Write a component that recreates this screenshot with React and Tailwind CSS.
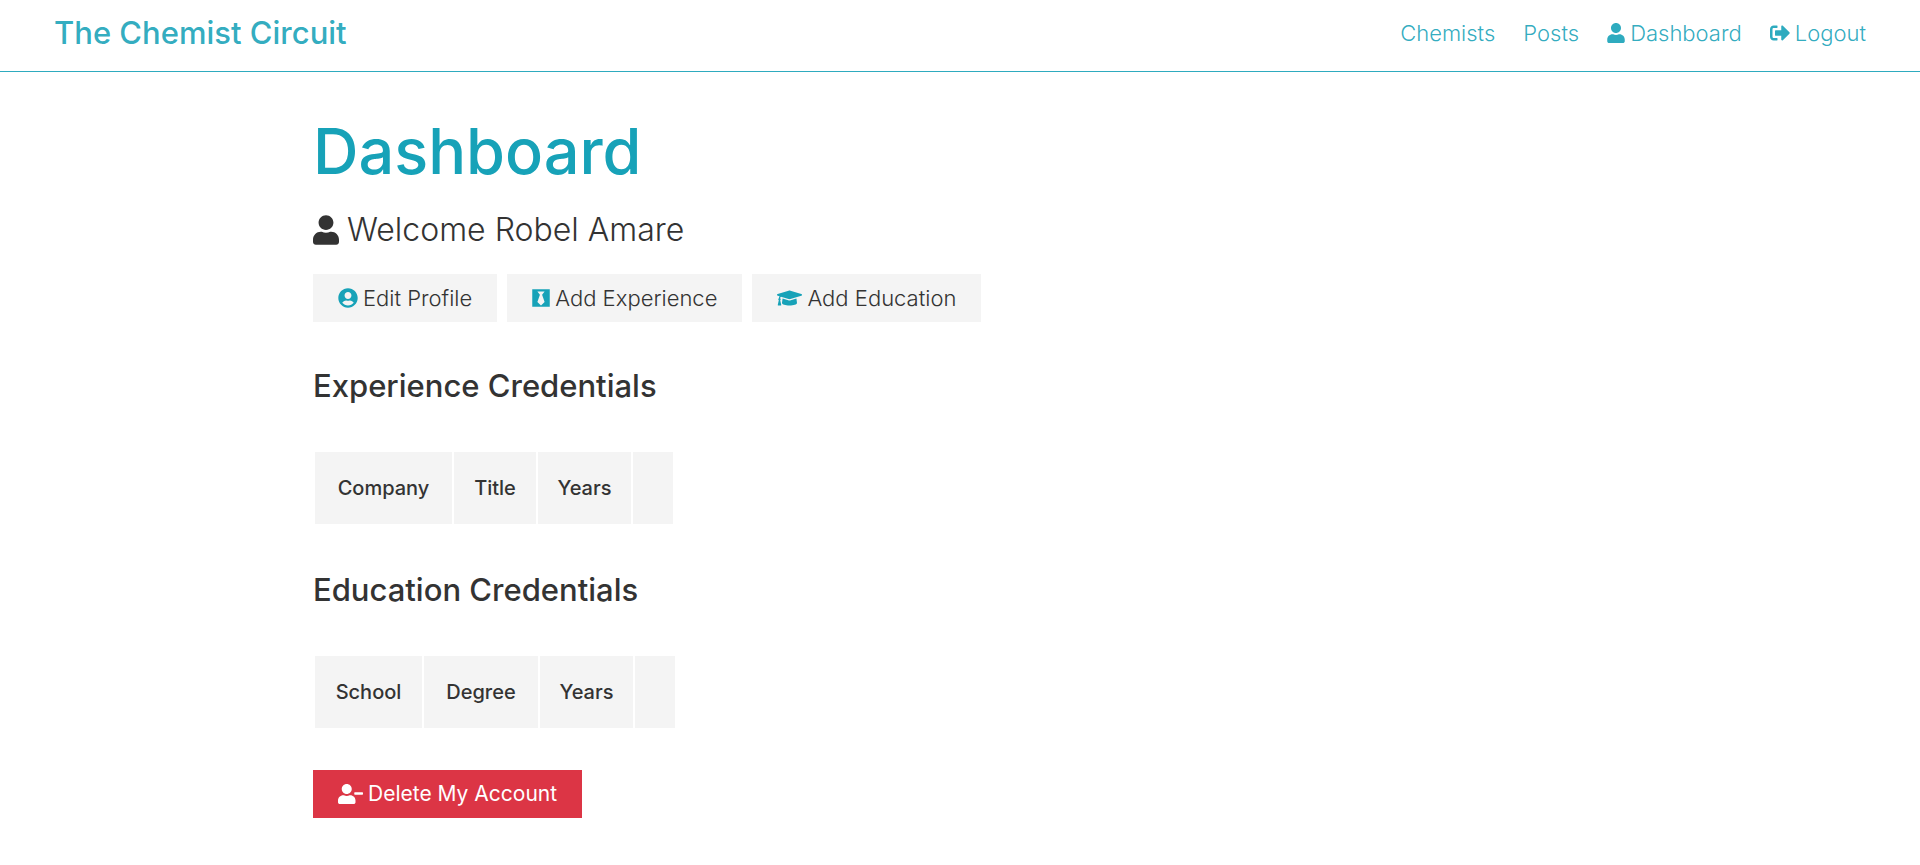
import {
  FaBlackTie,
  FaGraduationCap,
  FaSignOutAlt,
  FaUser,
  FaUserCircle,
  FaUserMinus,
} from "react-icons/fa";

function NavLink({ icon: Icon, iconWidth, children }) {
  return (
    <a href="#" className="flex items-center gap-[5px] hover:text-[#17a2b8]">
      {Icon && <Icon aria-hidden="true" className={`h-5 ${iconWidth}`} />}
      {children}
    </a>
  );
}

function Navbar() {
  return (
    <nav className="flex items-center justify-between border-b border-[#17a2b8]/90 px-[54px] pt-[9px] pb-[15px] text-[#17a2b8]/90">
      <h1 className="text-[31px] leading-[47px] font-medium">
        <a href="#">The Chemist Circuit</a>
      </h1>
      <div className="flex gap-7 text-[22px] leading-8 font-light">
        <NavLink>Chemists</NavLink>
        <NavLink>Posts</NavLink>
        <NavLink icon={FaUser} iconWidth="w-[18px]">Dashboard</NavLink>
        <NavLink icon={FaSignOutAlt} iconWidth="w-5">Logout</NavLink>
      </div>
    </nav>
  );
}

function ActionLink({ icon: Icon, iconWidth, children }) {
  return (
    <a
      href="#"
      className="flex items-center gap-[5px] bg-[#f4f4f4] px-[25px] py-2 text-[22px] leading-8 font-light"
    >
      <Icon aria-hidden="true" className={`h-5 text-[#17a2b8] ${iconWidth}`} />
      {children}
    </a>
  );
}

function Credentials({ title, columns }) {
  return (
    <section className="mt-10">
      <h2 className="text-[31px] leading-12 font-medium">{title}</h2>
      <table className="mt-10 border-separate border-spacing-[2px]">
        <thead>
          <tr>
            {columns.map(({ label, width }) => (
              <th
                key={label}
                scope="col"
                className={`bg-[#f4f4f4] py-5 text-center text-[20px] leading-8 font-medium ${width}`}
              >
                {label}
              </th>
            ))}
            <td className="bg-[#f4f4f4] p-5" />
          </tr>
        </thead>
      </table>
    </section>
  );
}

const experienceColumns = [
  { label: "Company", width: "min-w-[137px]" },
  { label: "Title", width: "min-w-[82px]" },
  { label: "Years", width: "min-w-[93px]" },
];

const educationColumns = [
  { label: "School", width: "min-w-[107px]" },
  { label: "Degree", width: "min-w-[114px]" },
  { label: "Years", width: "min-w-[93px]" },
];

export default function App() {
  return (
    <div className="min-h-screen bg-white font-['Inter',sans-serif] text-[#333]">
      <Navbar />
      <main className="mx-auto max-w-[1358px] px-8 pt-10 pb-10">
        <h1 className="text-[63px] leading-[78px] font-medium text-[#17a2b8]">Dashboard</h1>
        <p className="mt-4 flex items-center gap-2 text-[32px] leading-12 font-light">
          <FaUser aria-hidden="true" className="h-[30px] w-[26px]" />
          Welcome Robel Amare
        </p>
        <div className="mt-5 flex flex-wrap gap-[10px]">
          <ActionLink icon={FaUserCircle} iconWidth="w-5">Edit Profile</ActionLink>
          <ActionLink icon={FaBlackTie} iconWidth="w-[18px]">Add Experience</ActionLink>
          <ActionLink icon={FaGraduationCap} iconWidth="w-[25px]">Add Education</ActionLink>
        </div>
        <Credentials title="Experience Credentials" columns={experienceColumns} />
        <Credentials title="Education Credentials" columns={educationColumns} />
        <button
          type="button"
          className="mt-10 flex items-center gap-[5px] bg-[#dc3545] px-[25px] py-2 text-[21px] leading-8 text-white"
        >
          <FaUserMinus aria-hidden="true" className="h-5 w-[25px]" />
          Delete My Account
        </button>
      </main>
    </div>
  );
}
